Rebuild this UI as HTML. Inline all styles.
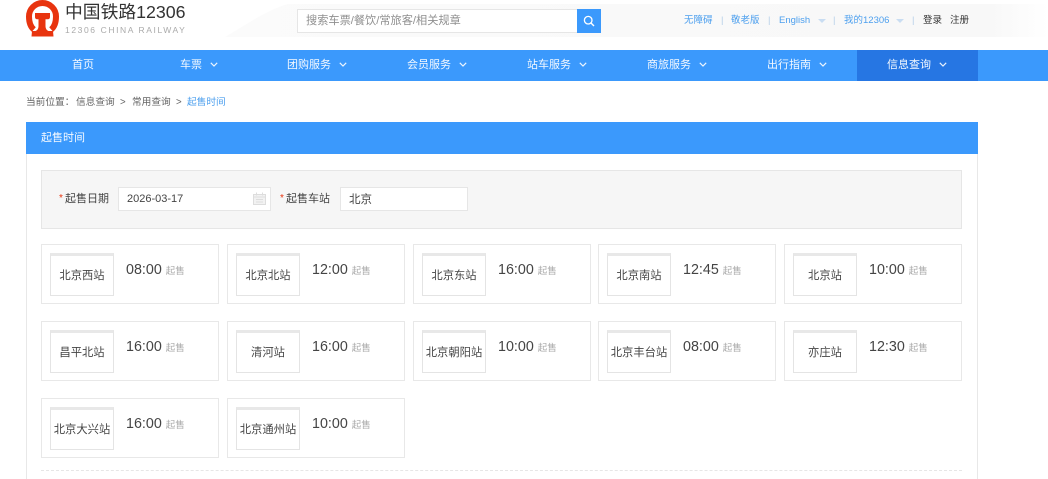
<!DOCTYPE html>
<html lang="zh">
<head>
<meta charset="utf-8">
<title>起售时间</title>
<style>
html,body{margin:0;padding:0;background:#fff}
body{width:1048px;height:479px;overflow:hidden;position:relative;font-family:"Liberation Sans","Noto Sans CJK SC",sans-serif;font-size:10px;color:#333}
#w{position:absolute;left:0;top:0;width:1048px;height:479px;overflow:hidden;filter:blur(.3px)}
.a{position:absolute;white-space:nowrap}
.nav{position:absolute;left:0;top:50px;width:1048px;height:31px;background:#3b99fc}
.navi{position:absolute;top:0;height:31px;line-height:31px;color:#f4f9ff;font-size:11px;text-align:center;white-space:nowrap}
.navi svg{margin-left:8px;vertical-align:1px;opacity:.9}
.card{position:absolute;width:176px;height:58px;border:1px solid #e8e8e8;background:#fff}
.th{position:absolute;left:8px;top:8px;width:62px;height:39px;border:1px solid #e4e4e4;border-top:3px solid #e8e8e8;background:#fff;font-size:11.300px;line-height:41px;text-align:center;color:#444;white-space:nowrap}
.th span{display:inline-block;margin:0 -10px}
.t{position:absolute;left:84px;top:15px;font-size:14.300px;line-height:20px;color:#444;white-space:nowrap}
.t small{font-size:9.500px;color:#aaa;margin-left:4px;vertical-align:0}
.link{color:#4c9fee;font-size:9.500px}
.sep{color:#b5cfe9;font-size:9.500px}
.bc{position:absolute;top:96px;line-height:13px;font-size:9.700px;color:#666;white-space:nowrap}
.lb{position:absolute;top:192px;line-height:14px;font-size:11px;color:#444;white-space:nowrap}
.st{position:absolute;top:192px;line-height:14px;font-size:10px;color:#e8340f}
</style>
</head>
<body>
<div id="w">
<!-- Top band -->
<svg class="a" style="left:222px;top:4px" width="826" height="33" viewBox="0 0 826 33">
  <defs><linearGradient id="g" x1="0" x2="1" y1="0" y2="0">
    <stop offset="0" stop-color="#fbfbfb"/><stop offset=".5" stop-color="#f9f9f9"/><stop offset=".93" stop-color="#f8f8f8"/><stop offset="1" stop-color="#fff"/>
  </linearGradient></defs>
  <path d="M3 33C25 20 45 6 66 0H826V33z" fill="url(#g)"/>
</svg>

<!-- Logo -->
<svg class="a" style="left:24px;top:0" width="38" height="38" viewBox="0 0 38 38">
  <path d="M9.800 29.500C6.600 26.800 5 22.400 5 16.500 5 9 11 3 18.500 3S32 9 32 16.500c0 5.900-1.600 10.300-4.800 13" fill="none" stroke="#e8340f" stroke-width="6"/>
  <path d="M11 13h15v4c0 1.400-.8 2.300-2.200 2.300h-2.300V26c0 2.400 1 4.200 3 5H29l.5 5.500H7.500L8 31h3.500c2-.8 3-2.600 3-5v-6.700h-1.300C11.800 19.300 11 18.400 11 17z" fill="#e8340f"/>
</svg>
<div class="a" style="left:65px;top:0;font-size:17.800px;line-height:24px;color:#333">中国铁路12306</div>
<div class="a" style="left:65px;top:24px;font-size:8.500px;line-height:12px;letter-spacing:1.600px;color:#aaa">12306 CHINA RAILWAY</div>

<!-- Search -->
<div class="a" style="left:297px;top:9px;width:279px;height:22px;border:1px solid #e6e6e6;background:#fff;line-height:22px;font-size:11.200px;color:#8f8f8f;text-indent:8px">搜索车票/餐饮/常旅客/相关规章</div>
<div class="a" style="left:577px;top:9px;width:24px;height:24px;background:#3b99fc">
  <svg style="position:absolute;left:6px;top:6px" width="12" height="12" viewBox="0 0 12 12"><circle cx="5.200" cy="5.200" r="3.800" fill="none" stroke="#fff" stroke-width="1.300"/><path d="M8 8l3 3" stroke="#fff" stroke-width="1.400" fill="none"/></svg>
</div>

<!-- Top links -->
<div class="a link" style="left:684px;top:14px;line-height:13px">无障碍</div>
<div class="a sep" style="left:721px;top:14px;line-height:13px">|</div>
<div class="a link" style="left:731px;top:14px;line-height:13px">敬老版</div>
<div class="a sep" style="left:768px;top:14px;line-height:13px">|</div>
<div class="a link" style="left:779px;top:14px;line-height:13px">English</div>
<svg class="a" style="left:818px;top:19px" width="8" height="4"><path d="M0 0h8L4 4z" fill="#c9ddf2"/></svg>
<div class="a sep" style="left:833px;top:14px;line-height:13px">|</div>
<div class="a link" style="left:844px;top:14px;line-height:13px">我的12306</div>
<svg class="a" style="left:896px;top:19px" width="8" height="4"><path d="M0 0h8L4 4z" fill="#c9ddf2"/></svg>
<div class="a sep" style="left:912px;top:14px;line-height:13px">|</div>
<div class="a" style="left:923px;top:14px;line-height:13px;font-size:9.500px;color:#333">登录</div>
<div class="a" style="left:950px;top:14px;line-height:13px;font-size:9.500px;color:#333">注册</div>

<!-- Nav -->
<div class="nav">
  <div class="a" style="left:857px;top:0;width:121px;height:31px;background:#2676e3"></div>
  <div class="navi" style="left:72px">首页</div>
  <div class="navi" style="left:180px">车票<svg width="8" height="5" viewBox="0 0 8 5"><path d="M.8.800L4 4 7.200.800" fill="none" stroke="#fff" stroke-width="1.200"/></svg></div>
  <div class="navi" style="left:287px">团购服务<svg width="8" height="5" viewBox="0 0 8 5"><path d="M.8.800L4 4 7.200.800" fill="none" stroke="#fff" stroke-width="1.200"/></svg></div>
  <div class="navi" style="left:407px">会员服务<svg width="8" height="5" viewBox="0 0 8 5"><path d="M.8.800L4 4 7.200.800" fill="none" stroke="#fff" stroke-width="1.200"/></svg></div>
  <div class="navi" style="left:527px">站车服务<svg width="8" height="5" viewBox="0 0 8 5"><path d="M.8.800L4 4 7.200.800" fill="none" stroke="#fff" stroke-width="1.200"/></svg></div>
  <div class="navi" style="left:647px">商旅服务<svg width="8" height="5" viewBox="0 0 8 5"><path d="M.8.800L4 4 7.200.800" fill="none" stroke="#fff" stroke-width="1.200"/></svg></div>
  <div class="navi" style="left:767px">出行指南<svg width="8" height="5" viewBox="0 0 8 5"><path d="M.8.800L4 4 7.200.800" fill="none" stroke="#fff" stroke-width="1.200"/></svg></div>
  <div class="navi" style="left:887px">信息查询<svg width="8" height="5" viewBox="0 0 8 5"><path d="M.8.800L4 4 7.200.800" fill="none" stroke="#fff" stroke-width="1.200"/></svg></div>
</div>

<!-- Breadcrumb -->
<div class="bc" style="left:26px">当前位置：</div>
<div class="bc" style="left:76px">信息查询</div>
<div class="bc" style="left:120px">&gt;</div>
<div class="bc" style="left:132px">常用查询</div>
<div class="bc" style="left:176px">&gt;</div>
<div class="bc" style="left:187px;color:#4c9fee">起售时间</div>

<!-- Panel -->
<div class="a" style="left:26px;top:122px;width:950px;height:357px;border:1px solid #e8e8e8;border-bottom:0"></div>
<div class="a" style="left:26px;top:122px;width:952px;height:32px;background:#3b99fc;color:#f4f9ff;font-size:11px;line-height:32px;text-indent:15px">起售时间</div>

<!-- Filter -->
<div class="a" style="left:41px;top:170px;width:919px;height:57px;border:1px solid #e6e6e6;background:#f6f6f6"></div>
<div class="st" style="left:59px">*</div>
<div class="lb" style="left:65px">起售日期</div>
<div class="a" style="left:118px;top:187px;width:151px;height:22px;border:1px solid #e6e6e6;background:#fff;font-size:11px;line-height:23px;text-indent:8px;color:#444">2026-03-17</div>
<svg class="a" style="left:253px;top:192px" width="13" height="13" viewBox="0 0 13 13"><path d="M.5 2.500h12v10H.5z" fill="#f2f2f2" stroke="#ddd"/><path d="M.5 5h12M3.500.5v3M9.500.5v3M3 7.500h7M3 10h7" stroke="#ddd" fill="none"/></svg>
<div class="st" style="left:280px">*</div>
<div class="lb" style="left:286px">起售车站</div>
<div class="a" style="left:340px;top:187px;width:126px;height:22px;border:1px solid #e6e6e6;background:#fff;font-size:11.500px;line-height:24px;text-indent:8px;color:#444">北京</div>

<!-- Cards -->
<div class="card" style="left:41px;top:244px"><div class="th"><span>北京西站</span></div><div class="t">08:00<small>起售</small></div></div>
<div class="card" style="left:227px;top:244px"><div class="th"><span>北京北站</span></div><div class="t">12:00<small>起售</small></div></div>
<div class="card" style="left:413px;top:244px"><div class="th"><span>北京东站</span></div><div class="t">16:00<small>起售</small></div></div>
<div class="card" style="left:598px;top:244px"><div class="th"><span>北京南站</span></div><div class="t">12:45<small>起售</small></div></div>
<div class="card" style="left:784px;top:244px"><div class="th"><span>北京站</span></div><div class="t">10:00<small>起售</small></div></div>

<div class="card" style="left:41px;top:321px"><div class="th"><span>昌平北站</span></div><div class="t">16:00<small>起售</small></div></div>
<div class="card" style="left:227px;top:321px"><div class="th"><span>清河站</span></div><div class="t">16:00<small>起售</small></div></div>
<div class="card" style="left:413px;top:321px"><div class="th"><span>北京朝阳站</span></div><div class="t">10:00<small>起售</small></div></div>
<div class="card" style="left:598px;top:321px"><div class="th"><span>北京丰台站</span></div><div class="t">08:00<small>起售</small></div></div>
<div class="card" style="left:784px;top:321px"><div class="th"><span>亦庄站</span></div><div class="t">12:30<small>起售</small></div></div>

<div class="card" style="left:41px;top:398px"><div class="th"><span>北京大兴站</span></div><div class="t">16:00<small>起售</small></div></div>
<div class="card" style="left:227px;top:398px"><div class="th"><span>北京通州站</span></div><div class="t">10:00<small>起售</small></div></div>

<div class="a" style="left:41px;top:470px;width:921px;border-top:1px dashed #e6e6e6"></div>
</div>
</body>
</html>
